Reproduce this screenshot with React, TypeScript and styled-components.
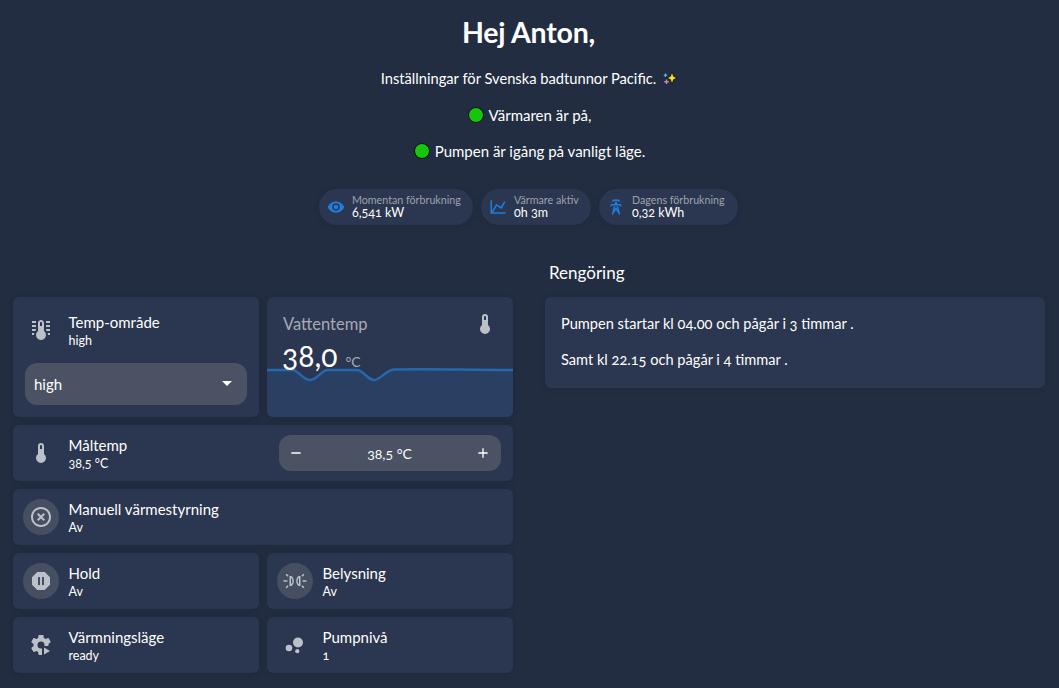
import React from "react";
import styled, { createGlobalStyle } from "styled-components";

const Global = createGlobalStyle`
  html, body { margin: 0; padding: 0; background: #222d42; }
  body { font-family: "Lato", "Open Sans", "Liberation Sans", sans-serif; color: #fff; font-variant-numeric: oldstyle-nums; }
`;

const Page = styled.div`
  width: 1059px;
  height: 688px;
  overflow: hidden;
  box-sizing: border-box;
  padding-top: 14px;
`;
const Header = styled.header`
  display: flex;
  flex-direction: column;
  align-items: center;
`;
const Title = styled.h1`
  margin: 0 2px 0 0;
  font-size: 28.5px;
  line-height: 36px;
  font-weight: 700;
  letter-spacing: -0.2px;
`;
const Line = styled.p`
  margin: ${p => p.$top ?? 19}px 0 0;
  font-size: ${p => p.$size ?? 15}px;
  line-height: 18px;
  display: flex;
  align-items: center;
  gap: ${p => p.$gap ?? 5}px;
`;
const Dot = styled.span`
  width: 14px;
  height: 14px;
  border-radius: 50%;
  background: #16c60c;
  border: 1px solid #0b0f14;
`;
const Chips = styled.div`
  display: flex;
  gap: 8px;
  margin: 29px 2px 0 0;
`;
const Chip = styled.div`
  height: 36px;
  width: ${p => p.$w}px;
  box-sizing: border-box;
  border-radius: 18px;
  background: #2b3650;
  box-shadow: 0 1px 6px rgba(0, 0, 0, 0.12);
  display: flex;
  align-items: center;
  gap: 7px;
  padding-left: 8px;
`;
const ChipIcon = styled.svg`
  width: 18px;
  height: 18px;
  fill: #1e7fe0;
  flex: none;
`;
const ChipText = styled.div`
  display: flex;
  flex-direction: column;
  padding-bottom: 3px;
`;
const ChipLabel = styled.span`
  font-size: 10.7px;
  line-height: 13px;
  color: #9ea3ad;
`;
const ChipValue = styled.span`
  font-size: 12.5px;
  line-height: 13px;
`;
const Columns = styled.div`
  display: grid;
  grid-template-columns: 500px 500px;
  column-gap: 32px;
  padding-left: 13px;
  margin-top: 72px;
`;
const LeftGrid = styled.div`
  display: grid;
  grid-template-columns: 246px 246px;
  gap: 8px;
`;
const Section = styled.section`
  margin-top: -36px;
`;
const SectionTitle = styled.h2`
  margin: 0 0 12px 4px;
  font-size: 17px;
  line-height: 24px;
  font-weight: 400;
`;
const Card = styled.div`
  position: relative;
  overflow: hidden;
  background: #2b3650;
  border-radius: 6px;
  box-shadow: 0 1px 6px rgba(0, 0, 0, 0.12);
  grid-column: ${p => (p.$wide ? "span 2" : "auto")};
  box-sizing: border-box;
`;
const Tile = styled(Card)`
  height: 56px;
  display: flex;
  align-items: center;
  gap: 9.5px;
  padding: 0 12px 0 10px;
`;
const TempCard = styled(Card)`
  height: 120px;
  display: flex;
  flex-direction: column;
`;
const TempTop = styled.div`
  height: 56px;
  margin-top: 5px;
  padding: 0 10px;
  display: flex;
  align-items: center;
  gap: 9.5px;
`;
const IconWrap = styled.div`
  width: 36px;
  height: 36px;
  flex: none;
  border-radius: 50%;
  display: flex;
  align-items: center;
  justify-content: center;
  background: ${p => (p.$circle ? "#464e61" : "transparent")};
`;
const Icon = styled.svg`
  width: ${p => p.$size ?? 24}px;
  height: ${p => p.$size ?? 24}px;
  fill: ${p => p.$fill ?? "#bcc0c8"};
  display: block;
`;
const TileText = styled.div`
  display: flex;
  flex-direction: column;
  flex: 1;
  min-width: 0;
`;
const TileName = styled.span`
  font-size: 15px;
  line-height: 19px;
`;
const TileState = styled.span`
  font-size: 12.5px;
  line-height: 15px;
  margin-top: 1px;
`;
const Select = styled.div`
  margin: 5px 12px 0;
  height: 42px;
  box-sizing: border-box;
  padding: 0 15px 1px 9px;
  border-radius: 12px;
  background: #4a5263;
  display: flex;
  align-items: center;
  justify-content: space-between;
  font-size: 15px;
`;
const Caret = styled.span`
  width: 0;
  height: 0;
  border-left: 5px solid transparent;
  border-right: 5px solid transparent;
  border-top: 5px solid #fff;
`;
const Stepper = styled.div`
  width: 222px;
  height: 36px;
  flex: none;
  border-radius: 12px;
  background: #4a5263;
  display: flex;
  align-items: center;
  justify-content: space-between;
  padding: 0 10px 0 9px;
  box-sizing: border-box;
  font-size: 14px;
`;
const Sensor = styled(Card)`
  height: 120px;
  padding: 15px 16px 0;
`;
const SensorHead = styled.div`
  display: flex;
  justify-content: space-between;
  align-items: center;
  height: 24px;
  font-size: 16.5px;
  color: #a7abb5;
`;
const Reading = styled.div`
  position: relative;
  z-index: 1;
  display: flex;
  align-items: baseline;
  gap: 8px;
  font-size: 30px;
  line-height: 36px;
  font-weight: 400;
  margin: 1px 0 0 -1px;
`;
const Unit = styled.span`
  font-size: 14px;
  color: #a7abb5;
`;
const Graph = styled.svg`
  position: absolute;
  left: 0;
  top: 0;
  width: 246px;
  height: 120px;
`;
const Copy = styled(Card)`
  padding: 18px 15px 0 16px;
  height: 91px;
`;
const CopyLine = styled.p`
  margin: 0 0 18px;
  font-size: 14.6px;
  line-height: 18px;
`;

const P = {
  therm: "M15 13V5A3 3 0 0 0 9 5V13A5 5 0 1 0 15 13M12 4A1 1 0 0 1 13 5V8H11V5A1 1 0 0 1 12 4Z",
  lines:
    "M17 3H21V5H17V3M17 7H21V9H17V7M17 11H21V13H17.75L17 12.1V11M21 15V17H19C19 16.31 18.9 15.63 18.71 15H21M7 3V5H3V3H7M7 7V9H3V7H7M7 11V12.1L6.25 13H3V11H7M3 15H5.29C5.1 15.63 5 16.31 5 17H3V15M15 13V5C15 3.34 13.66 2 12 2S9 3.34 9 5V13C6.79 14.66 6.34 17.79 8 20S12.79 22.66 15 21 17.66 16.21 16 14C15.72 13.62 15.38 13.28 15 13M12 4C12.55 4 13 4.45 13 5V8H11V5C11 4.45 11.45 4 12 4Z",
  eye: "M12,9A3,3 0 0,0 9,12A3,3 0 0,0 12,15A3,3 0 0,0 15,12A3,3 0 0,0 12,9M12,17A5,5 0 0,1 7,12A5,5 0 0,1 12,7A5,5 0 0,1 17,12A5,5 0 0,1 12,17M12,4.5C7,4.5 2.73,7.61 1,12C2.73,16.39 7,19.5 12,19.5C17,19.5 21.27,16.39 23,12C21.27,7.61 17,4.5 12,4.5Z",
  chart: "M16,11.78L20.24,4.45L21.97,5.45L16.74,14.5L10.23,10.75L5.46,19H22V21H2V3H4V17.54L9.5,8L16,11.78Z",
  tower:
    "M8.28,5.45L6.5,4.55L7.76,2H16.23L17.5,4.55L15.72,5.44L15,4H9L8.28,5.45M18.62,8H14.09L13.3,5H10.7L9.91,8H5.38L4.1,10.55L5.89,11.44L6.62,10H17.38L18.1,11.44L19.89,10.55L18.62,8M17.77,22H15.7L15.46,21.1L12,15.9L8.53,21.1L8.3,22H6.23L9.12,11H11.19L10.83,12.35L12,14.1L13.16,12.35L12.81,11H14.88L17.77,22M11,15L10.24,13.86L9.78,15.63L11,15M14.22,15.63L13.76,13.87L13,15L14.22,15.63Z",
  close:
    "M12,20C7.59,20 4,16.41 4,12C4,7.59 7.59,4 12,4C16.41,4 20,7.59 20,12C20,16.41 16.41,20 12,20M12,2C6.47,2 2,6.47 2,12C2,17.53 6.47,22 12,22C17.53,22 22,17.53 22,12C22,6.47 17.53,2 12,2M14.59,8L12,10.59L9.41,8L8,9.41L10.59,12L8,14.59L9.41,16L12,13.41L14.59,16L16,14.59L13.41,12L16,9.41L14.59,8Z",
  pause: "M15.73,3L21,8.27V15.73L15.73,21H8.27L3,15.73V8.27L8.27,3H15.73M15,16V8H13V16H15M11,16V8H9V16H11Z",
  cog: "M12,15.5A3.5,3.5 0 0,1 8.5,12A3.5,3.5 0 0,1 12,8.5A3.5,3.5 0 0,1 15.5,12A3.5,3.5 0 0,1 12,15.5M19.43,12.97C19.47,12.65 19.5,12.33 19.5,12C19.5,11.67 19.47,11.34 19.43,11L21.54,9.37C21.73,9.22 21.78,8.95 21.66,8.73L19.66,5.27C19.54,5.05 19.27,4.96 19.05,5.05L16.56,6.05C16.04,5.66 15.5,5.32 14.87,5.07L14.5,2.42C14.46,2.18 14.25,2 14,2H10C9.75,2 9.54,2.18 9.5,2.42L9.13,5.07C8.5,5.32 7.96,5.66 7.44,6.05L4.95,5.05C4.73,4.96 4.46,5.05 4.34,5.27L2.34,8.73C2.21,8.95 2.27,9.22 2.46,9.37L4.57,11C4.53,11.34 4.5,11.67 4.5,12C4.5,12.33 4.53,12.65 4.57,12.97L2.46,14.63C2.27,14.78 2.21,15.05 2.34,15.27L4.34,18.73C4.46,18.95 4.73,19.03 4.95,18.95L7.44,17.94C7.96,18.34 8.5,18.68 9.13,18.93L9.5,21.58C9.54,21.82 9.75,22 10,22H14C14.25,22 14.46,21.82 14.5,21.58L14.87,18.93C15.5,18.67 16.04,18.34 16.56,17.94L19.05,18.95C19.27,19.03 19.54,18.95 19.66,18.73L21.66,15.27C21.78,15.05 21.73,14.78 21.54,14.63L19.43,12.97Z",
  minus: "M19,13H5V11H19V13Z",
  plus: "M19,13H13V19H11V13H5V11H11V5H13V11H19V13Z",
};

const ChipGlyph = ({ d }: { d: string }) => (
  <ChipIcon viewBox="0 0 24 24">
    <path d={d} />
  </ChipIcon>
);
const Glyph = ({ d, size, fill }: { d: string; size?: number; fill?: string }) => (
  <Icon viewBox="0 0 24 24" $size={size} $fill={fill}>
    <path d={d} />
  </Icon>
);

const CogPlay = () => (
  <Icon viewBox="0 0 24 24">
    <path d={P.cog} />
    <path d="M13 13H24V24H13Z" fill="#2b3650" />
    <path d="M15 14.5V21.5L21 18Z" />
  </Icon>
);
const Lights = () => (
  <Icon viewBox="0 0 24 24">
    <path d="M6.5 7H8.4C10 8.4 10.8 10 10.8 12S10 15.6 8.4 17H6.5V7ZM8 8.7V15.3C8.9 14.4 9.4 13.3 9.4 12S8.9 9.6 8 8.7Z" fillRule="evenodd" />
    <path d="M17.5 7H15.6C14 8.4 13.2 10 13.2 12S14 15.6 15.6 17H17.5V7ZM16 8.7V15.3C15.1 14.4 14.6 13.3 14.6 12S15.1 9.6 16 8.7Z" fillRule="evenodd" />
    <path d="M0.5 11.2H4.5V12.8H0.5ZM19.5 11.2H23.5V12.8H19.5ZM2.6 5.8L3.7 4.7L5.6 6.6L4.5 7.7ZM21.4 5.8L20.3 4.7L18.4 6.6L19.5 7.7ZM2.6 18.2L3.7 19.3L5.6 17.4L4.5 16.3ZM21.4 18.2L20.3 19.3L18.4 17.4L19.5 16.3Z" />
  </Icon>
);
const Bubbles = () => (
  <Icon viewBox="0 0 24 24">
    <circle cx="15" cy="9.5" r="5" />
    <circle cx="6" cy="15" r="3.3" />
    <circle cx="14.3" cy="18.2" r="2.1" />
  </Icon>
);
const Sparkles = () => (
  <svg width="16" height="16" viewBox="0 0 16 16">
    <path d="M10 1.5L11.6 6.4L15.5 8L11.6 9.6L10 14.5L8.4 9.6L4.5 8L8.4 6.4Z" fill="#ffe21f" stroke="#11131a" strokeWidth="0.9" />
    <path d="M3.5 3.5V7M1.8 5.2H5.2" stroke="#4fb8e8" strokeWidth="1.3" />
    <path d="M4.5 9.5V14M2.3 11.8H6.7" stroke="#d283b6" strokeWidth="1.4" />
  </svg>
);

const TileCard = ({
  icon,
  circle,
  name,
  state,
  wide,
  children,
}: {
  icon: React.ReactNode;
  circle?: boolean;
  name: string;
  state: string;
  wide?: boolean;
  children?: React.ReactNode;
}) => (
  <Tile $wide={wide}>
    <IconWrap $circle={circle}>{icon}</IconWrap>
    <TileText>
      <TileName>{name}</TileName>
      <TileState>{state}</TileState>
    </TileText>
    {children}
  </Tile>
);

export default function App() {
  const curve = "M0 73H26C31 73 36 83 43 83C50 83 55 73 60 73H90C96 73 101 83 107 83C113 83 119 73 127 72.5C160 71.5 200 73 246 73";
  return (
    <Page>
      <Global />
      <Header>
        <Title>Hej Anton,</Title>
        <Line $top={19} $gap={6} $size={14.7}>
          Inställningar för Svenska badtunnor Pacific. <Sparkles />
        </Line>
        <Line>
          <Dot />
          Värmaren är på,
        </Line>
        <Line $top={18}>
          <Dot />
          Pumpen är igång på vanligt läge.
        </Line>
        <Chips>
          <Chip $w={154}>
            <ChipGlyph d={P.eye} />
            <ChipText>
              <ChipLabel>Momentan förbrukning</ChipLabel>
              <ChipValue>6,541 kW</ChipValue>
            </ChipText>
          </Chip>
          <Chip $w={110}>
            <ChipGlyph d={P.chart} />
            <ChipText>
              <ChipLabel>Värmare aktiv</ChipLabel>
              <ChipValue>0h 3m</ChipValue>
            </ChipText>
          </Chip>
          <Chip $w={139}>
            <ChipGlyph d={P.tower} />
            <ChipText>
              <ChipLabel>Dagens förbrukning</ChipLabel>
              <ChipValue>0,32 kWh</ChipValue>
            </ChipText>
          </Chip>
        </Chips>
      </Header>
      <Columns>
        <LeftGrid>
          <TempCard>
            <TempTop>
              <IconWrap>
                <Glyph d={P.lines} />
              </IconWrap>
              <TileText>
                <TileName>Temp-område</TileName>
                <TileState>high</TileState>
              </TileText>
            </TempTop>
            <Select>
              high
              <Caret />
            </Select>
          </TempCard>
          <Sensor>
            <Graph viewBox="0 0 246 120">
              <path d={`${curve}V120H0Z`} fill="#2a4062" />
              <path d={curve} fill="none" stroke="#2468b4" strokeWidth="2.4" />
            </Graph>
            <SensorHead>
              Vattentemp
              <Glyph d={P.therm} size={24} />
            </SensorHead>
            <Reading>
              38,0 <Unit>°C</Unit>
            </Reading>
          </Sensor>
          <TileCard wide icon={<Glyph d={P.therm} />} name="Måltemp" state="38,5 °C">
            <Stepper>
              <Glyph d={P.minus} size={16} fill="#ffffff" />
              38,5 °C
              <Glyph d={P.plus} size={16} fill="#ffffff" />
            </Stepper>
          </TileCard>
          <TileCard wide circle icon={<Glyph d={P.close} />} name="Manuell värmestyrning" state="Av" />
          <TileCard circle icon={<Glyph d={P.pause} />} name="Hold" state="Av" />
          <TileCard circle icon={<Lights />} name="Belysning" state="Av" />
          <TileCard icon={<CogPlay />} name="Värmningsläge" state="ready" />
          <TileCard icon={<Bubbles />} name="Pumpnivå" state="1" />
        </LeftGrid>
        <Section>
          <SectionTitle>Rengöring</SectionTitle>
          <Copy>
            <CopyLine>Pumpen startar kl 04.00 och pågår i 3 timmar .</CopyLine>
            <CopyLine>Samt kl 22.15 och pågår i 4 timmar .</CopyLine>
          </Copy>
        </Section>
      </Columns>
    </Page>
  );
}
